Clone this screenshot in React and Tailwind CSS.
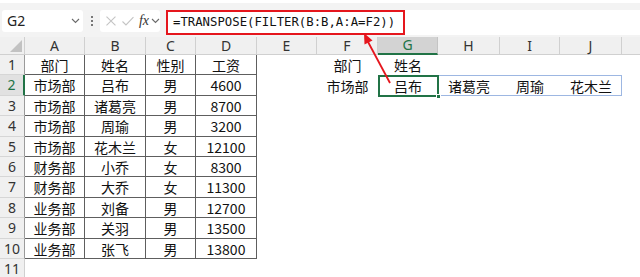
import React from "react";

const colW = [60, 61, 50, 61, 60, 61, 60, 62, 60, 62];
const letters = ["A", "B", "C", "D", "E", "F", "G", "H", "I", "J"];
const rowH = [20, 21, 20, 21, 20, 20, 21, 20, 21, 20];

const table = [
  ["部门", "姓名", "性别", "工资"],
  ["市场部", "吕布", "男", "4600"],
  ["市场部", "诸葛亮", "男", "8700"],
  ["市场部", "周瑜", "男", "3200"],
  ["市场部", "花木兰", "女", "12100"],
  ["财务部", "小乔", "女", "8300"],
  ["财务部", "大乔", "女", "11300"],
  ["业务部", "刘备", "男", "12700"],
  ["业务部", "关羽", "男", "13500"],
  ["业务部", "张飞", "男", "13800"],
];

const extra = {
  0: { 5: "部门", 6: "姓名" },
  1: { 5: "市场部", 6: "吕布", 7: "诸葛亮", 8: "周瑜", 9: "花木兰" },
};

const cjk = { fontFamily: '"Noto Sans CJK SC", "Noto Sans", sans-serif' };

function Chevron({ className }) {
  return (
    <svg className={className} width="9" height="6" viewBox="0 0 9 6" fill="none">
      <path d="M1 1l3.5 3.5L8 1" stroke="#6b6b6b" strokeWidth="1.1" />
    </svg>
  );
}

export default function App() {
  return (
    <div className="relative w-[640px] h-[277px] overflow-hidden bg-white" style={cjk}>
      {/* formula bar */}
      <div className="h-[37px] bg-[#f3f3f3] border-t-[3px] border-white flex items-start pt-[7px]">
        <div className="ml-[2px] w-[81px] h-[22px] bg-white rounded-[3px] flex items-center justify-between pl-[5px] pr-[3px]">
          <span className="text-[14px] text-[#222] leading-none" style={{ fontFamily: '"Noto Sans", sans-serif' }}>G2</span>
          <Chevron />
        </div>
        <div className="w-[17px] h-[22px] flex flex-col items-center justify-center gap-[2px]">
          <span className="w-[2px] h-[2px] bg-[#777]"></span>
          <span className="w-[2px] h-[2px] bg-[#777]"></span>
          <span className="w-[2px] h-[2px] bg-[#777]"></span>
        </div>
        <div className="w-[60px] h-[22px] bg-white rounded-[3px] flex items-center pl-[4px]">
          <svg width="14" height="14" viewBox="0 0 14 14" fill="none">
            <path d="M2.5 2.5l9 9M11.5 2.5l-9 9" stroke="#c4c4c4" strokeWidth="1.1" />
          </svg>
          <svg className="ml-[3px]" width="14" height="14" viewBox="0 0 14 14" fill="none">
            <path d="M1.5 7.5l3.5 3.5 7.5-8" stroke="#c4c4c4" strokeWidth="1.1" />
          </svg>
          <span className="ml-[4px] italic text-[14px] leading-none text-[#333]" style={{ fontFamily: '"Liberation Serif", serif' }}>fx</span>
          <Chevron className="ml-[2px]" />
        </div>
        <div className="ml-[6px] flex-1 h-[25px] bg-white flex">
          <span
            className="h-full border-2 border-[#e5161d] flex items-center pl-[5px] pr-[8px] text-[12.3px] text-[#111] whitespace-nowrap"
            style={{ fontFamily: '"DejaVu Sans Mono", monospace' }}
          >
            =TRANSPOSE(FILTER(B:B,A:A=F2))
          </span>
        </div>
      </div>

      {/* sheet */}
      <div className="flex flex-col">
        {/* column header */}
        <div className="flex h-[18px]">
          <div className="w-[25px] h-full bg-[#f0f0f0] border-r border-b border-[#d0d0d0] relative">
            <svg className="absolute right-[2px] bottom-[2px]" width="12" height="12" viewBox="0 0 12 12">
              <path d="M12 0L12 12L0 12Z" fill="#c2c2c2" />
            </svg>
          </div>
          {letters.map((l, i) =>
            i === 6 ? (
              <div
                key={l}
                style={{ width: colW[i] }}
                className="h-full bg-[#d3d3d3] border-r border-[#c4c4c4] border-b-2 border-b-[#217346] flex items-center justify-center text-[14px] text-[#217346] leading-none"
              >
                <span style={{ fontFamily: '"Noto Sans", sans-serif' }}>{l}</span>
              </div>
            ) : (
              <div
                key={l}
                style={{ width: colW[i] }}
                className="h-full bg-[#f0f0f0] border-r border-b border-[#d0d0d0] flex items-center justify-center text-[14px] text-[#333] leading-none"
              >
                <span style={{ fontFamily: '"Noto Sans", sans-serif' }}>{l}</span>
              </div>
            )
          )}
          <div className="flex-1 h-full bg-[#f0f0f0] border-b border-[#d0d0d0]"></div>
        </div>

        {rowH.map((h, r) => (
          <div key={r} className="flex" style={{ height: h }}>
            <div
              className={
                r === 1
                  ? "w-[25px] h-full bg-[#e1e1e1] border-r-2 border-r-[#217346] border-b border-b-[#d6d6d6] flex items-center justify-center text-[14px] text-[#217346] leading-none"
                  : "w-[25px] h-full bg-[#f0f0f0] border-r border-r-[#9a9a9a] border-b border-b-[#d6d6d6] flex items-center justify-center text-[14px] text-[#333] leading-none"
              }
            >
              <span style={{ fontFamily: '"Noto Sans", sans-serif' }}>{r + 1}</span>
            </div>
            {colW.map((w, c) => {
              const inTable = c < 4;
              const txt = inTable ? table[r][c] : extra[r] && extra[r][c];
              let cls = "h-full flex items-center justify-center text-[14px] text-[#111] leading-none relative";
              if (inTable) {
                cls += " border-r border-b border-[#5e5e5e]";
              }
              return (
                <div key={c} style={{ width: w }} className={cls}>
                  {txt ? <span>{txt}</span> : null}
                  {r === 1 && c === 6 ? (
                    <>
                      <div className="absolute left-0 top-0 w-[244px] h-full border border-[#9db7e2] pointer-events-none"></div>
                      <div className="absolute left-0 top-0 w-[61px] h-[22px] border-2 border-[#217346] pointer-events-none">
                        <div className="absolute right-[-4px] bottom-[-4px] w-[5px] h-[5px] bg-[#217346] border border-white"></div>
                      </div>
                    </>
                  ) : null}
                </div>
              );
            })}
            <div className="flex-1"></div>
          </div>
        ))}

        <div className="flex h-[20px]">
          <div className="w-[25px] h-full bg-[#f0f0f0] border-r border-[#d0d0d0] flex items-center justify-center text-[14px] text-[#333] leading-none">
            <span style={{ fontFamily: '"Noto Sans", sans-serif' }}>11</span>
          </div>
        </div>
      </div>

      {/* red arrow annotation */}
      <svg className="absolute left-0 top-0 pointer-events-none" width="640" height="277" viewBox="0 0 640 277">
        <line x1="390" y1="83" x2="367" y2="40" stroke="#e5161d" strokeWidth="1.8" />
        <polygon points="364,33 372.5,40.5 364.5,44.5" fill="#e5161d" />
      </svg>
    </div>
  );
}
